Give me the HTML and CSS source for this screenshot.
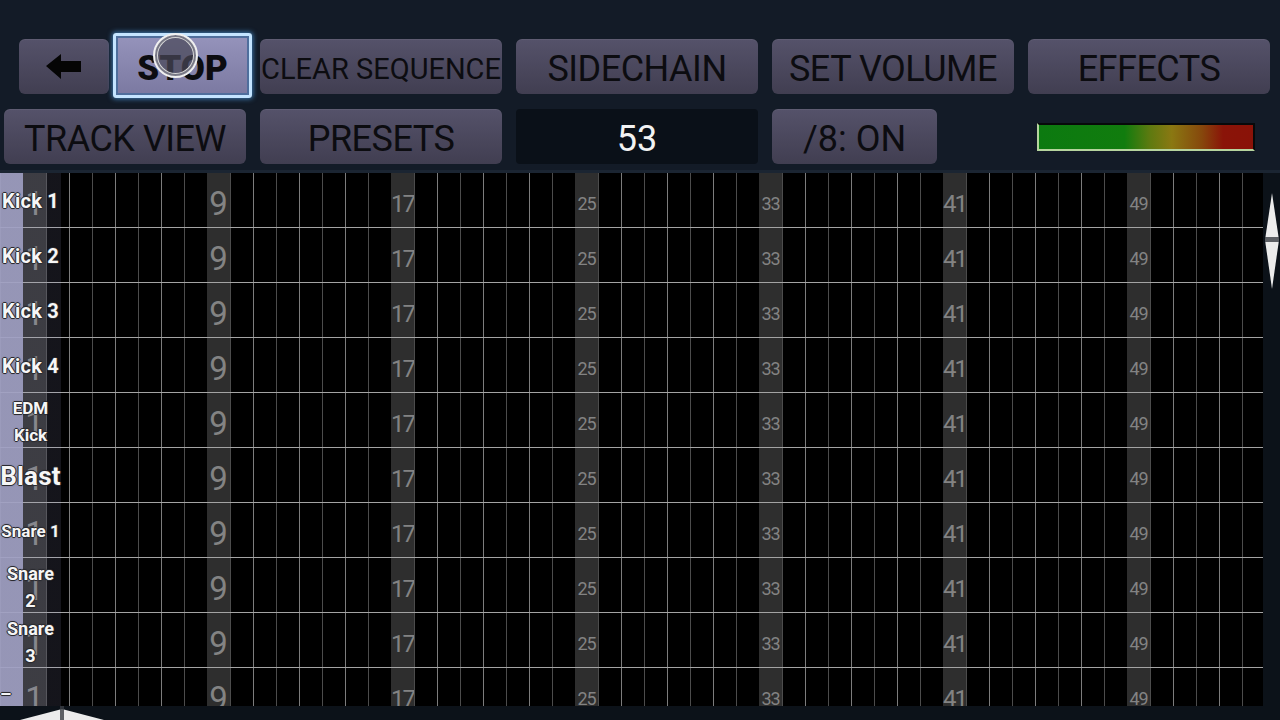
FILE: index.html
```html
<!DOCTYPE html>
<html lang="en">
<head>
    <meta charset="UTF-8">
    <meta name="viewport" content="width=device-width, initial-scale=1.0">
    <title>Beat Sequencer</title>
    <link rel="stylesheet" href="styles.css">
</head>
<body>

<div class="topbar">
    <div class="toprow first">
        <button class="btn btn-back" type="button">
            <svg width="36" height="26" viewBox="0 0 36 26">
                <polygon points="0,12 15,0 15,7 35,7 35,18 15,18 15,25" fill="#050505"/>
            </svg>
        </button>
        <button class="btn btn-stop" type="button">STOP</button>
        <button class="btn btn-wide btn-clear" type="button">CLEAR SEQUENCE</button>
        <button class="btn btn-wide gap" type="button">SIDECHAIN</button>
        <button class="btn btn-wide gap" type="button">SET VOLUME</button>
        <button class="btn btn-wide gap" type="button">EFFECTS</button>
    </div>
    <div class="toprow second">
        <button class="btn btn-wide" type="button">TRACK VIEW</button>
        <button class="btn btn-wide" type="button">PRESETS</button>
        <div class="readout">53</div>
        <button class="btn btn-toggle" type="button">/8: ON</button>
        <div class="meter"></div>
    </div>
    <div class="touch"></div>
</div>

<div class="seq">
    <div class="grid" id="grid">
        <div class="rows" id="rows"></div>
        <div class="labels" id="labels"></div>
    </div>
    <div class="vscroll">
        <svg width="14" height="96" viewBox="0 0 14 96">
            <polygon points="7,0 14,47 7,96 0,47" fill="#ececec"/>
            <rect x="0" y="44" width="14" height="5" fill="#3a3d44" opacity="0.8"/>
        </svg>
    </div>
    <div class="hscroll">
        <svg width="84" height="14" viewBox="0 0 84 14">
            <polygon points="0,14 42,3 84,14" fill="#ececec"/>
            <rect x="40" y="0" width="4" height="14" fill="#3a3d44" opacity="0.8"/>
        </svg>
    </div>
</div>

<script>
    const tracks = [
        ["Kick 1", ""],
        ["Kick 2", ""],
        ["Kick 3", ""],
        ["Kick 4", ""],
        ["EDM<br>Kick", "two"],
        ["Blast", "big"],
        ["Snare 1", "mid"],
        ["Snare<br>2", "two wide"],
        ["Snare<br>3", "two wide"],
        ["&ndash;", "stub"]
    ];

    // every 8th step gets a shaded column with its number
    const bars = [[1, "lg"], [9, "lg"], [17, "md"], [25, "sm"], [33, "sm"], [41, "md"], [49, "sm"]];

    const rows = document.getElementById("rows");
    const labels = document.getElementById("labels");

    tracks.forEach(function (track) {
        const row = document.createElement("div");
        row.className = "seq-row";
        bars.forEach(function (bar) {
            const cell = document.createElement("span");
            cell.className = "bar " + bar[1];
            cell.style.gridColumn = bar[0] + 1;
            cell.textContent = bar[0];
            row.appendChild(cell);
        });
        rows.appendChild(row);

        const label = document.createElement("div");
        label.className = "label " + track[1];
        label.innerHTML = track[0];
        labels.appendChild(label);
    });
</script>

</body>
</html>
```

FILE: styles.css
```css
* {
    box-sizing: border-box;
}

body {
    margin: 0;
    width: 1280px;
    height: 720px;
    overflow: hidden;
    background-color: #131b27;
    font-family: Roboto, "Liberation Sans", sans-serif;
}

/* top controls */
.topbar {
    position: relative;
    height: 170px;
    padding-top: 39px;
}

.toprow {
    display: flex;
    height: 55px;
    align-items: flex-start;
}

.toprow.first {
    padding-left: 19px;
}

.toprow.second {
    padding-left: 4px;
    margin-top: 15px;
    gap: 14px;
    align-items: center;
}

.btn {
    height: 55px;
    border: none;
    border-radius: 6px;
    background: linear-gradient(#55526a, #413e51);
    box-shadow: inset 0 1px 0 rgba(255, 255, 255, 0.06);
    color: #0c0c10;
    font-family: Roboto, "Liberation Sans", sans-serif;
    font-size: 36px;
    letter-spacing: -0.5px;
    padding: 5px 0 0;
    display: flex;
    align-items: center;
    justify-content: center;
    white-space: nowrap;
}

.btn-back {
    width: 90px;
    padding: 0;
}

.btn-stop {
    width: 139px;
    height: 65px;
    margin: -6px 0 0 4px;
    border: 3px solid #c4e4ff;
    border-radius: 3px;
    background: linear-gradient(#9593bb, #7b79a1);
    box-shadow: 0 0 5px 1px rgba(80, 160, 230, 0.7), inset 0 0 0 2px #4f6e9c;
    font-weight: 900;
    font-size: 35px;
    letter-spacing: 0;
}

.btn-wide {
    width: 242px;
}

.btn-clear {
    margin-left: 8px;
    font-size: 29px;
    letter-spacing: 0;
}

.gap {
    margin-left: 14px;
}

.btn-toggle {
    width: 165px;
    letter-spacing: 0;
}

.readout {
    width: 242px;
    height: 55px;
    border-radius: 4px;
    background-color: #0a1018;
    color: #f2f2f2;
    font-size: 36px;
    padding-top: 5px;
    display: flex;
    align-items: center;
    justify-content: center;
}

.meter {
    width: 218px;
    height: 28px;
    margin-left: 86px;
    border: 2px solid;
    border-color: #07090a #07090a #b6d49e #b6d49e;
    background: linear-gradient(90deg, #0c7a10 0%, #117c0e 40%, #5f7a10 52%, #8a7812 62%, #86480c 76%, #8a1408 86%, #8a1208 100%);
}

/* touch marker over the stop button */
.touch {
    position: absolute;
    left: 153px;
    top: 33px;
    width: 45px;
    height: 45px;
    border-radius: 50%;
    border: 2px solid #f0f0f0;
    background-color: rgba(72, 70, 88, 0.72);
    box-shadow: inset 0 0 0 2px rgba(110, 110, 125, 0.9), inset 0 0 0 3px #d8d8d8;
}

/* sequencer */
.seq {
    display: grid;
    grid-template-columns: 1263px 17px;
    grid-template-rows: 533px 14px;
    border-top: 3px solid #1b2532;
    background-color: #0c1219;
}

.grid {
    position: relative;
    overflow: hidden;
    background-color: #000;
}

.seq-row {
    height: 55px;
    border-bottom: 1px solid #a4a4a4;
    display: grid;
    grid-template-columns: repeat(55, 23px);
    background-image: repeating-linear-gradient(90deg, #4c4c4c 0 1px, transparent 1px 23px, #7c7c7c 23px 24px, transparent 24px 46px);
}

.bar {
    grid-row: 1;
    background-color: #2e2e2e;
    color: #838383;
    display: flex;
    align-items: center;
    justify-content: center;
    padding-top: 7px;
    line-height: 1;
    overflow: hidden;
}

.bar.lg {
    font-size: 33px;
}

.bar.md {
    font-size: 24px;
    letter-spacing: -2px;
}

.bar.sm {
    font-size: 18px;
    letter-spacing: -1px;
}

.labels {
    position: absolute;
    left: 0;
    top: 0;
    bottom: 0;
    width: 61px;
    background: linear-gradient(90deg, rgba(161, 161, 196, 0.93) 0 23px, rgba(160, 160, 210, 0.13) 23px 61px);
}

.label {
    height: 55px;
    display: flex;
    align-items: center;
    justify-content: center;
    text-align: center;
    white-space: nowrap;
    color: #f6f6f6;
    font-weight: 700;
    font-size: 20px;
    letter-spacing: 0.2px;
    line-height: 27px;
    padding-top: 2px;
    text-shadow: 1px 0 0 #2a2a30, -1px 0 0 #2a2a30, 0 1px 0 #2a2a30, 0 -1px 0 #2a2a30, 0 0 2px #000;
}

.label.two {
    font-size: 17px;
    letter-spacing: 0;
}

.label.two.wide {
    font-size: 18px;
}

.label.big {
    font-size: 26px;
}

.label.mid {
    font-size: 17px;
    letter-spacing: 0;
}

.label.stub {
    justify-content: flex-start;
    align-items: flex-start;
    padding-top: 12px;
    font-size: 18px;
}

.vscroll {
    grid-row: 1 / 3;
    grid-column: 2;
    padding: 20px 0 0 2px;
}

.hscroll {
    grid-row: 2;
    grid-column: 1;
    padding-left: 20px;
    overflow: hidden;
}

.hscroll svg,
.vscroll svg {
    display: block;
}
```
